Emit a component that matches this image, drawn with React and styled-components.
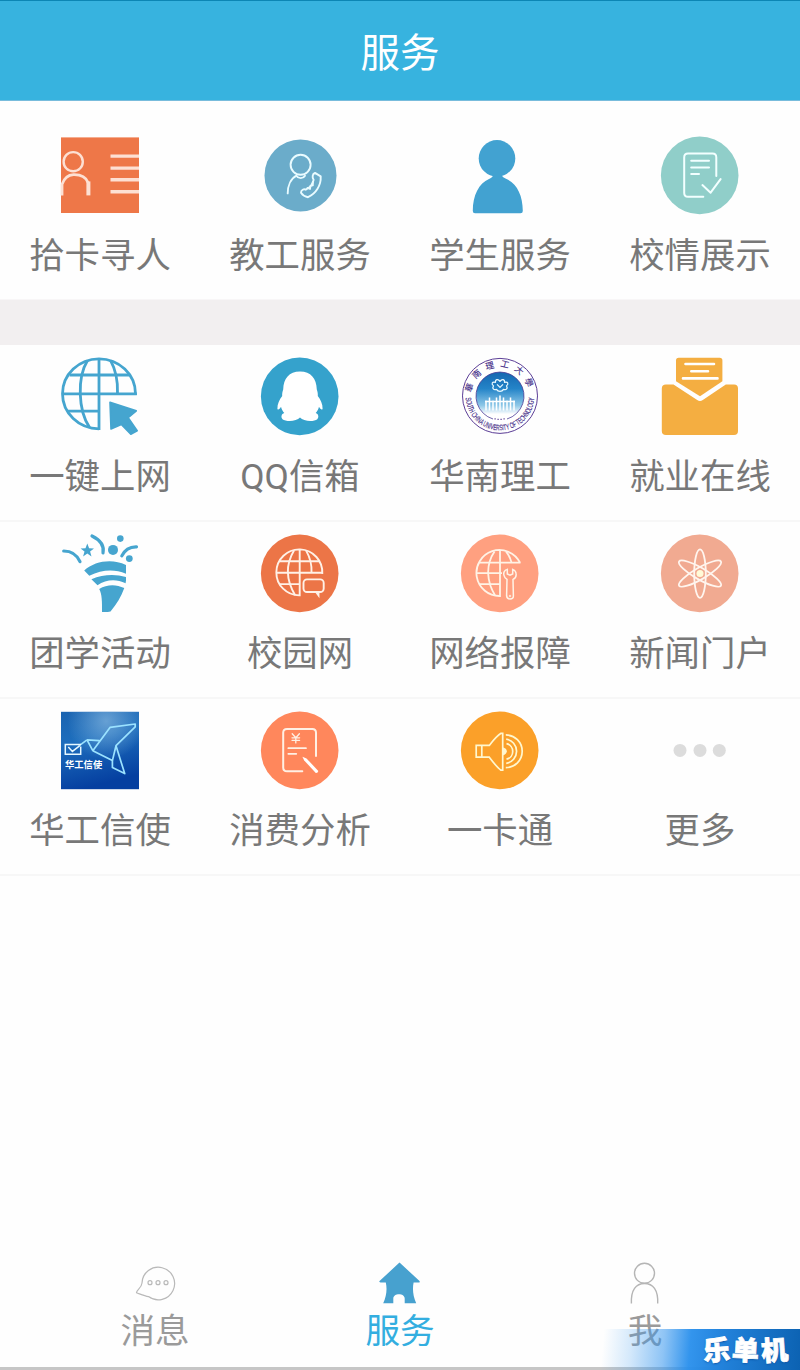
import React from "react";
import styled, { createGlobalStyle } from "styled-components";

const GlobalStyle = createGlobalStyle`
    * {
        box-sizing: border-box;
    }

    body {
        margin: 0;
        background: #fefefe;
        font-family: Roboto, "Noto Sans CJK SC", sans-serif;
    }
`;

const Disc = ({ color, r = 38.8, cx = 38.7, cy = 39 }) => (
    <circle cx={cx} cy={cy} r={r} fill={color} />
);

const CardIcon = () => (
    <Icon>
        <rect y="1" width="78" height="75.6" fill="#ee7748" />
        <g fill="none" stroke="#fde0d3" strokeWidth="2.4">
            <circle cx="12.2" cy="25.3" r="9.6" />
            <path d="M1 59V48C3 42 7 38.5 12.5 38.2C20 38 25 41 27 46" strokeWidth="2.8" />
            <path d="M27.4 45V59" strokeWidth="4" />
            <path d="M49.5 19.7H78M49.5 31.7H78M49.5 43.4H78M49.5 55.3H78" strokeWidth="3.4" />
        </g>
    </Icon>
);

const TeacherIcon = () => (
    <Icon>
        <Disc color="#6bacca" r={36} cx={39.5} />
        <g fill="none" stroke="#e9fbff" strokeWidth="1.9" strokeLinecap="round" strokeLinejoin="round">
            <circle cx="39.6" cy="28.4" r="10" />
            <path d="M35.3 39.3C37.5 42.5 42 42.5 44 39.3M35.5 39.2C30 42 26.7 49 26.7 57" />
            <path d="M54 36.5L59.7 40C60.2 49 55 57 47 60.8C43.5 60.3 41.5 58.5 40 56.3C40 53.5 43 52.3 44.8 53.3C49 51 52 47 52.6 43.4C51 41 51.3 37.5 54 36.5Z" />
            <path d="M46.5 51.5L49 52.5L49.5 49.5L51.8 49L51.8 45.5" />
        </g>
    </Icon>
);

const StudentIcon = () => (
    <Icon>
        <g fill="#42a2d1">
            <circle cx="36" cy="22" r="18.3" />
            <path d="M32 38H41C41 40 42 41 45 42.3C56 47 61.8 59 61.8 74.5Q61.8 76.8 59.5 76.8H14Q11.8 76.8 11.8 74.5C11.8 59 18 46.5 28 42.5C31 41.3 32 40 32 38Z" />
        </g>
    </Icon>
);

const SchoolIcon = () => (
    <Icon>
        <Disc color="#90cec9" />
        <g fill="none" stroke="#f2ffff" strokeWidth="2" strokeLinecap="round" strokeLinejoin="round">
            <path d="M42.3 60.3H27Q23.2 60.3 23.2 56.5V21Q23.2 17.2 27 17.2H51.5Q55.3 17.2 55.3 21V39.5" />
            <path d="M30.2 24.4H48M30.2 31H48M30.2 37.6H38" />
            <path d="M41.4 48.7L49.6 56.3L59.6 42.7" />
        </g>
    </Icon>
);

const GlobeIcon = () => (
    <Icon>
        <g fill="none" stroke="#45a5cf" strokeWidth="2.8">
            <path d="M74.5 37.5V36.4A36.5 35 0 1 0 38 71.4" />
            <path d="M38 1.3V72.7M1 36.4H75.8M8.5 17.6H68M6.5 53.8H38" />
            <path d="M26.5 3C16 20 17 53 28.5 70M49.5 3C54.5 12 57 24 56.5 36.4" />
        </g>
        <path
            d="M49 44.8L75.3 53.4L67.2 60.2L76.2 73.4L69.8 76.8L60.3 67L50 71.5Z"
            fill="#45a5cf"
            stroke="#45a5cf"
            strokeWidth="1.6"
            strokeLinejoin="round"
        />
    </Icon>
);

const PenguinIcon = () => (
    <Icon>
        <Disc color="#35a2cc" />
        <path
            d="M39 14.2C28 14.2 22.5 21.5 22.2 32C21.5 34 21 36 21.2 38.5C18.5 42 16.2 46.5 16.4 51.5C17.2 52.8 18.6 51.8 20 49.3C20.7 52 21.8 54 23.3 55.7C20.2 56.5 19.8 60 21.5 61.8C25 64.5 35.5 64.2 39 60.2C42.5 64.2 53 64.5 56.3 61.8C58.2 60 57.5 56.5 54.7 55.7C56.2 54 57.3 52 58 49.3C59.4 51.8 60.8 52.8 61.6 51.5C61.8 46.5 59.5 42 56.8 38.5C57 36 56.5 34 55.8 32C55.5 21.5 50 14.2 39 14.2Z"
            fill="#fff"
        />
    </Icon>
);

const CollegeIcon = () => (
    <Icon>
        <defs>
            <linearGradient id="college" x1="0" y1="0" x2="0" y2="1">
                <stop offset="0" stopColor="#1567b0" />
                <stop offset="0.35" stopColor="#2484c8" />
                <stop offset="0.7" stopColor="#8fc8e8" />
                <stop offset="0.88" stopColor="#fff" />
            </linearGradient>
            <path id="collegeTop" d="M10.3 38.5A28.7 28.7 0 0 1 67.7 38.5" />
            <path id="collegeBottom" d="M4.9 34A34.4 34.4 0 1 0 73.1 34" />
        </defs>
        <circle cx="39" cy="38.5" r="37.5" fill="#fff" stroke="#5b3d96" strokeWidth="1" />
        <circle cx="39" cy="38.5" r="24" fill="url(#college)" />
        <path d="M32 61.6A24 24 0 1 1 46 61.6" fill="none" stroke="#4a3c96" strokeWidth="0.8" />
        <g fill="none" stroke="#eafaff" strokeWidth="1.2" strokeLinejoin="round">
            <path d="M39 24C41 21 44 22 43.5 25C47 24 48 26.5 45.5 28.5C47 31 45.5 33 42.5 32C41 34.5 37 34.5 35.5 32C32.5 33 31 31 32.5 28.5C30 26.5 31 24 34.5 25C34 22 37 21 39 24Z" />
            <path d="M36 27L39 30L42 27" />
        </g>
        <path
            d="M25 53V43M28.5 53V40M32 53V43M35.5 53V40M39 53V38M42.5 53V40M46 53V43M49.5 53V40M53 53V43M24 44H54"
            stroke="#fff"
            strokeWidth="1.5"
        />
        <SealText size={8.6} $weight={0.1}>
            <textPath href="#collegeTop" startOffset="50%" textAnchor="middle" letterSpacing="5.4">
                華南理工大學
            </textPath>
        </SealText>
        <SealText size={8} $weight={0.15}>
            <textPath href="#collegeBottom" startOffset="50%" textAnchor="middle" textLength="104" lengthAdjust="spacingAndGlyphs">
                SOUTH CHINA UNIVERSITY OF TECHNOLOGY
            </textPath>
        </SealText>
        <path d="M33.5 61.5h1.2M36.5 62h1.2M39.5 62h1.2M42.5 61.5h1.2" stroke="#5b3d96" strokeWidth="1.4" />
    </Icon>
);

const MailIcon = () => (
    <Icon>
        <path
            d="M15 23.8V3Q15 0.4 17.7 0.4H58.7Q61.4 0.4 61.4 3V23.8L39 38.8Z"
            fill="#f4ae41"
        />
        <path
            d="M12.5 27H5Q0.8 27 0.8 31V73.5Q0.8 77.5 5 77.5H73Q77 77.5 77 73.5V31Q77 27 73 27H64.8L41.8 42.5Q39 44.8 36.2 42.5Z"
            fill="#f4ae41"
        />
        <path d="M24.5 6.6H53M30.3 13.8H47M22 21H56.5" stroke="#fff" strokeWidth="2.6" strokeLinecap="round" />
    </Icon>
);

const PartyIcon = () => (
    <Icon>
        <g fill="none" stroke="#46a5cf" strokeWidth="3.2" strokeLinecap="round">
            <path d="M2.7 16.6C10 16.6 16 20.5 19 27.3M31 1.6C40 6 43.5 11 42 18.5M60.8 21.5C64 15 69 12.2 75.5 12.4" />
        </g>
        <g fill="#46a5cf">
            <path d="M26.3 9.2L28.1 13.9L33 14.1L29.1 17.2L30.5 22L26.3 19.2L22.1 22L23.5 17.2L19.6 14.1L24.5 13.9Z" />
            <circle cx="52" cy="15.5" r="5" />
            <circle cx="59.3" cy="4.2" r="3.3" />
            <circle cx="68.3" cy="24.2" r="3.4" />
            <path d="M23.2 36C34 26.5 51 24 65 30.5V39.3C53 34.5 41 35.3 28.3 41.4Z" />
            <path d="M30.4 44.8C42 40 54 39.3 65 42.7C65.2 45 65 47 64.6 48.9C55 44.3 45 45.2 36.5 50.8Z" />
            <path d="M38.2 54.5C46 49.8 55 49.5 63.3 53.7C60 63 55.5 70 49.5 77Q45.5 78 41 77.5C41.2 68 41 59 38.2 54.5Z" />
        </g>
    </Icon>
);

const CampusIcon = () => (
    <Icon>
        <Disc color="#ec7547" />
        <g fill="none" stroke="#fff1e7" strokeWidth="1.9">
            <path d="M61.3 39.5A23 23 0 1 0 38.7 61V15.5" />
            <path d="M15.5 38.4H62M18.8 26.9H58.5M18.8 49.7H38.7" />
            <path d="M33 16C24 31 26 47 34 60.5M45 16C49 23 51 31 50.5 38.5" />
            <rect x="42.5" y="45" width="20.2" height="12.6" rx="3.5" />
            <path d="M55 57.6L57.5 61V57.6" />
        </g>
    </Icon>
);

const RepairIcon = () => (
    <Icon>
        <Disc color="#ffa080" />
        <g fill="none" stroke="#fff3e6" strokeWidth="1.8">
            <path d="M59 28.3A23 23 0 1 0 39 61.6V16" />
            <path d="M18.3 28.3H59.5M16 38.8H41M18.3 49.8H39" />
            <path d="M33.5 17C24 31 26 48 34 60.8M45 17Q49 22 50.5 28" />
            <path
                d="M46.3 35C43.4 36 42.3 38.5 43 41C43.4 43 44.8 44.2 46 45L45.6 61.5Q45.8 64.5 49 64.5Q52.4 64.5 52.4 61.5L52 45C54.3 44 55.5 41.5 55 38.8C54.7 36.9 53.5 35.6 51.7 35V39.5L49 40.7L46.3 39.5Z"
                strokeWidth="1.5"
            />
            <circle cx="49" cy="61.6" r="0.8" strokeWidth="1" />
        </g>
    </Icon>
);

const AtomIcon = () => (
    <Icon>
        <Disc color="#f1aa91" />
        <g fill="none" stroke="#fff5ee" strokeWidth="1.8">
            {[0, 60, 120].map((angle) => (
                <ellipse key={angle} cx="39" cy="39.2" rx="5.8" ry="24.2" transform={`rotate(${angle} 39 39.2)`} />
            ))}
        </g>
        <circle cx="39" cy="39.2" r="3.5" fill="#fffbd8" />
    </Icon>
);

const MessengerIcon = () => (
    <Icon>
        <defs>
            <linearGradient id="sky" x1="0" y1="0" x2="0.25" y2="1">
                <stop offset="0" stopColor="#1a63b0" />
                <stop offset="0.4" stopColor="#1d6ebd" />
                <stop offset="1" stopColor="#053fa0" />
            </linearGradient>
            <radialGradient id="glow" cx="0.58" cy="0.12" r="0.5">
                <stop offset="0" stopColor="#79aedb" stopOpacity="0.8" />
                <stop offset="1" stopColor="#79aedb" stopOpacity="0" />
            </radialGradient>
        </defs>
        <rect y="0.4" width="78" height="77.4" fill="url(#sky)" />
        <rect y="0.4" width="78" height="77.4" fill="url(#glow)" />
        <g fill="none" stroke="#9be2ff" strokeWidth="1.7" strokeLinejoin="round">
            <path d="M26 28.5L38.5 29.3M26 28.5L31.8 39.3L49 16L74.2 12.6V15.5L55 34.3L51.4 49.2L31.8 39.3" />
            <path d="M55 34.3L63.7 62.2L51.4 56.2V49.2" />
            <path d="M18 34.5L26 28.5" />
        </g>
        <path d="M20 33H4.3V42.8H19.7V35M7.3 35.5L11.4 40L18.5 34.5" fill="none" stroke="#e6f8ff" strokeWidth="1.5" />
        <BadgeText x="4" y="56.3">
            华工信使
        </BadgeText>
    </Icon>
);

const SpendingIcon = () => (
    <Icon>
        <Disc color="#ff875c" />
        <g fill="none" stroke="#fff0e4" strokeWidth="2" strokeLinecap="round">
            <path d="M41.3 59.8H26Q22.2 59.8 22.2 56V21.3Q22.2 17.5 26 17.5H51.3Q55 17.5 55 21.3V44.5" />
            <path d="M27.3 36.8H45M27.3 42.4H35.3" strokeWidth="1.7" />
            <path d="M31.2 22.3L34.8 26.4L38.4 22.3M34.8 26.4V31.5M31 26.4H38.6M31 28.9H38.6" strokeWidth="1.3" />
        </g>
        <path d="M41.4 45.3L45.5 47L57.3 59.5Q57 61.8 54.8 61.6L43.2 49Z" fill="#fff" />
    </Icon>
);

const SpeakerIcon = () => (
    <Icon>
        <Disc color="#fba029" />
        <g fill="none" stroke="#fff7cf" strokeWidth="1.7">
            <path d="M15.2 34H28.3C33 28 36.5 24 40 21.9H41.7V58.8H40C36.5 56.5 33 52 28.3 45.8H15.2ZM20.8 34V45.8" />
            <path d="M45.5 32.2A8 8 0 0 1 45.5 47.8M45.2 27.7A12.3 12.3 0 0 1 45.2 52M44.8 23.5A16.4 16.4 0 0 1 44.8 56.3" />
        </g>
        <path d="M41.7 35.8Q45.8 37 45.8 39.9T41.7 44Z" fill="#fff7cf" />
    </Icon>
);

const MoreIcon = () => (
    <Icon>
        {[19, 39, 58.3].map((cx) => (
            <Disc key={cx} color="#dcdcdc" r={6.5} cx={cx} />
        ))}
    </Icon>
);

const ChatIcon = () => (
    <TabIcon viewBox="0 0 42 42">
        <g fill="none" stroke="#b9b9b9" strokeWidth="1.2">
            <path d="M8 21A16.3 16.3 0 1 1 14.5 34.6C10.5 34 6 32 2.5 30.8C2.3 28 7.5 26.5 8 21Z" />
            <circle cx="16" cy="20.7" r="2" />
            <circle cx="24" cy="20.7" r="2" />
            <circle cx="32" cy="20.7" r="2" />
        </g>
    </TabIcon>
);

const HomeIcon = () => (
    <TabIcon viewBox="0 0 42 42">
        <path
            d="M20.5 0.5L0.3 19.3Q0 20.3 1.5 20.4H6.8C8.3 27 7.5 34 4.2 41.2H14.3V36.5C14.3 30.8 25.7 30.8 25.7 36.5V41.2H37.2C34 34 33.3 27 34.6 20.4H40.5Q41 19.8 40.5 19Z"
            fill="#47a1cf"
        />
    </TabIcon>
);

const PersonIcon = () => (
    <TabIcon viewBox="0 0 42 42">
        <g fill="none" stroke="#b5b5b5" strokeWidth="1.4">
            <circle cx="20.5" cy="11.3" r="10" />
            <path d="M7.4 41.5C6.8 28 12 21.5 20.5 21.5S34.3 28 33.7 41.5" />
        </g>
    </TabIcon>
);

const topServices = [
    { label: "拾卡寻人", icon: CardIcon },
    { label: "教工服务", icon: TeacherIcon },
    { label: "学生服务", icon: StudentIcon },
    { label: "校情展示", icon: SchoolIcon },
];

const services = [
    [
        { label: "一键上网", icon: GlobeIcon },
        { label: "QQ信箱", icon: PenguinIcon },
        { label: "华南理工", icon: CollegeIcon },
        { label: "就业在线", icon: MailIcon },
    ],
    [
        { label: "团学活动", icon: PartyIcon },
        { label: "校园网", icon: CampusIcon },
        { label: "网络报障", icon: RepairIcon },
        { label: "新闻门户", icon: AtomIcon },
    ],
    [
        { label: "华工信使", icon: MessengerIcon },
        { label: "消费分析", icon: SpendingIcon },
        { label: "一卡通", icon: SpeakerIcon },
        { label: "更多", icon: MoreIcon },
    ],
];

const tabs = [
    { label: "消息", icon: ChatIcon },
    { label: "服务", icon: HomeIcon, active: true },
    { label: "我", icon: PersonIcon },
];

const ServiceItem = ({ label, icon: Glyph }) => (
    <Item>
        <Glyph />
        <Label>{label}</Label>
    </Item>
);

const App = () => {
    return (
        <Screen>
            <GlobalStyle />
            <Header>服务</Header>
            <TopRow>
                {topServices.map((item) => (
                    <ServiceItem key={item.label} {...item} />
                ))}
            </TopRow>
            <Gap />
            {services.map((row, index) => (
                <Row key={index}>
                    {row.map((item) => (
                        <ServiceItem key={item.label} {...item} />
                    ))}
                </Row>
            ))}
            <TabBar>
                {tabs.map(({ label, icon: Glyph, active }) => (
                    <Tab key={label} $active={active}>
                        <Glyph />
                        {label}
                    </Tab>
                ))}
            </TabBar>
            <Watermark>
                <span>乐</span>
                <span>单</span>
                <span>机</span>
            </Watermark>
        </Screen>
    );
};

const Screen = styled.div`
    position: relative;
    display: flex;
    flex-direction: column;
    width: 800px;
    height: 1370px;
    overflow: hidden;
    background: #fefefe;
`;

const Header = styled.header`
    display: flex;
    align-items: center;
    justify-content: center;
    height: 101px;
    padding-bottom: 3px;
    border-top: 1px solid #0c86b4;
    border-bottom: 1px solid #78bcdc;
    background: #37b3df;
    color: #fff;
    font-size: 39.5px;
`;

const Row = styled.div`
    display: grid;
    grid-template-columns: repeat(4, 200px);
    height: 177px;
    padding-top: 12px;
    border-bottom: 2px solid #f7f7f7;
`;

const TopRow = styled(Row)`
    height: 199px;
    padding-top: 35px;
    border-bottom: 1px solid #f8f6f7;
`;

const Gap = styled.div`
    height: 45px;
    background: #f2eff0;
`;

const Item = styled.div`
    display: flex;
    flex-direction: column;
    align-items: center;
`;

const Icon = styled.svg.attrs({ viewBox: "0 -0.4 78 78" })`
    width: 78px;
    height: 78px;
    overflow: visible;
`;

const Label = styled.span`
    margin-top: 17px;
    color: #787878;
    font-size: 35.4px;
    line-height: 50px;
    white-space: nowrap;
`;

const SealText = styled.text`
    fill: #3f2a86;
    stroke: #3f2a86;
    stroke-width: ${({ $weight }) => $weight}px;
    font-family: "Liberation Sans", "Noto Sans CJK SC", sans-serif;
    font-size: ${({ size }) => size}px;
`;

const BadgeText = styled.text`
    fill: #fff;
    font-size: 9.3px;
    font-weight: 700;
`;

const TabBar = styled.nav`
    display: flex;
    height: 108px;
    margin-top: auto;
    padding: 0 32.5px;
    border-bottom: 3px solid #c6c6c6;
`;

const Tab = styled.div`
    display: flex;
    flex-direction: column;
    align-items: center;
    width: 245px;
    color: ${({ $active }) => ($active ? "#33aee0" : "#9a9a9a")};
    font-size: 34.6px;
    line-height: 54px;
`;

const TabIcon = styled.svg`
    width: 42px;
    height: 42px;
    flex-shrink: 0;
`;

const Watermark = styled.div`
    position: absolute;
    right: 0;
    bottom: 0;
    display: flex;
    align-items: center;
    justify-content: flex-end;
    width: 200px;
    height: 41px;
    padding-right: 10px;
    background: linear-gradient(
        95deg,
        rgba(60, 155, 240, 0) 2%,
        rgba(60, 155, 240, 0.22) 16%,
        rgba(50, 148, 238, 0.55) 32%,
        rgba(40, 143, 236, 0.95) 45%,
        #2383dc 60%,
        #0c62b2 100%
    );
    color: #fff;
    font-size: 27px;
    font-weight: 900;
    line-height: 40px;
    -webkit-text-stroke: 0.8px #fff;
    text-shadow: 0 1px 2px #0a4c9a;

    span {
        width: 29px;
        padding-top: 2px;
        transform: rotate(-4deg);
    }

    span:nth-child(2) {
        transform: rotate(3deg);
    }
`;

export default App;
